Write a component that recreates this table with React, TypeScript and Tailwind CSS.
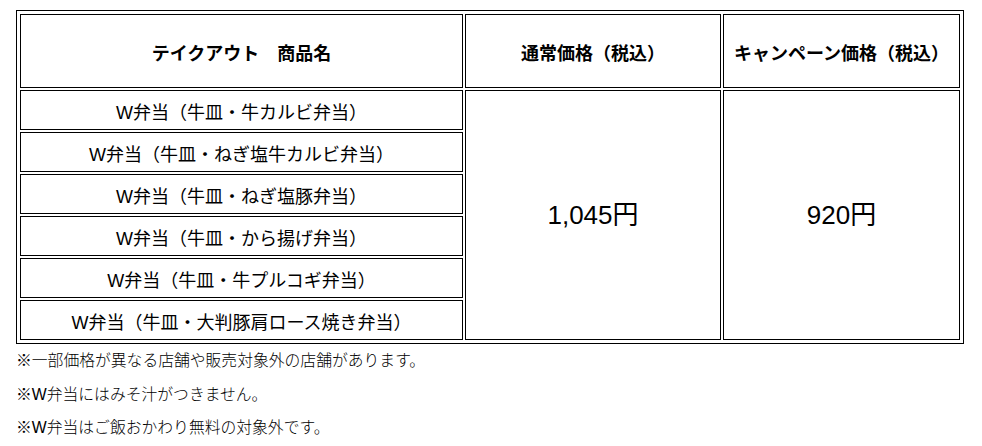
import React from "react";

const items = [
  "W弁当（牛皿・牛カルビ弁当）",
  "W弁当（牛皿・ねぎ塩牛カルビ弁当）",
  "W弁当（牛皿・ねぎ塩豚弁当）",
  "W弁当（牛皿・から揚げ弁当）",
  "W弁当（牛皿・牛プルコギ弁当）",
  "W弁当（牛皿・大判豚肩ロース焼き弁当）",
];

export default function App() {
  return (
    <div
      className="w-[982px] h-[446px] bg-white text-black pl-[16px] pt-[10px]"
      style={{ fontFamily: '"Liberation Sans", "Noto Sans CJK JP", sans-serif' }}
    >
      <div className="w-[948px] border border-black p-[1px]">
        <table className="border-separate border-spacing-[2px] table-fixed w-[944px]">
          <colgroup>
            <col className="w-[443px]" />
            <col className="w-[256px]" />
            <col className="w-[237px]" />
          </colgroup>
          <thead>
            <tr>
              <th className="h-[74px] border border-black text-[18px] font-semibold text-center align-middle pt-[6px]">
                テイクアウト　商品名
              </th>
              <th className="h-[74px] border border-black text-[18px] font-semibold text-center align-middle pt-[6px]">
                通常価格（税込）
              </th>
              <th className="h-[74px] border border-black text-[18px] font-semibold text-center align-middle pt-[6px]">
                キャンペーン価格（税込）
              </th>
            </tr>
          </thead>
          <tbody>
            {items.map((name, i) => (
              <tr key={i}>
                <td className="h-[40px] border border-black text-[18px] text-center align-middle pt-[6px] leading-none">
                  {name}
                </td>
                {i === 0 && (
                  <>
                    <td
                      rowSpan={6}
                      className="border border-black text-[26px] text-center align-middle"
                    >
                      1,045円
                    </td>
                    <td
                      rowSpan={6}
                      className="border border-black text-[26px] text-center align-middle"
                    >
                      920円
                    </td>
                  </>
                )}
              </tr>
            ))}
          </tbody>
        </table>
      </div>
      <div className="mt-0 text-[15.8px] leading-[33.5px] font-light">
        <p>※一部価格が異なる店舗や販売対象外の店舗があります。</p>
        <p>※W弁当にはみそ汁がつきません。</p>
        <p>※W弁当はご飯おかわり無料の対象外です。</p>
      </div>
    </div>
  );
}
